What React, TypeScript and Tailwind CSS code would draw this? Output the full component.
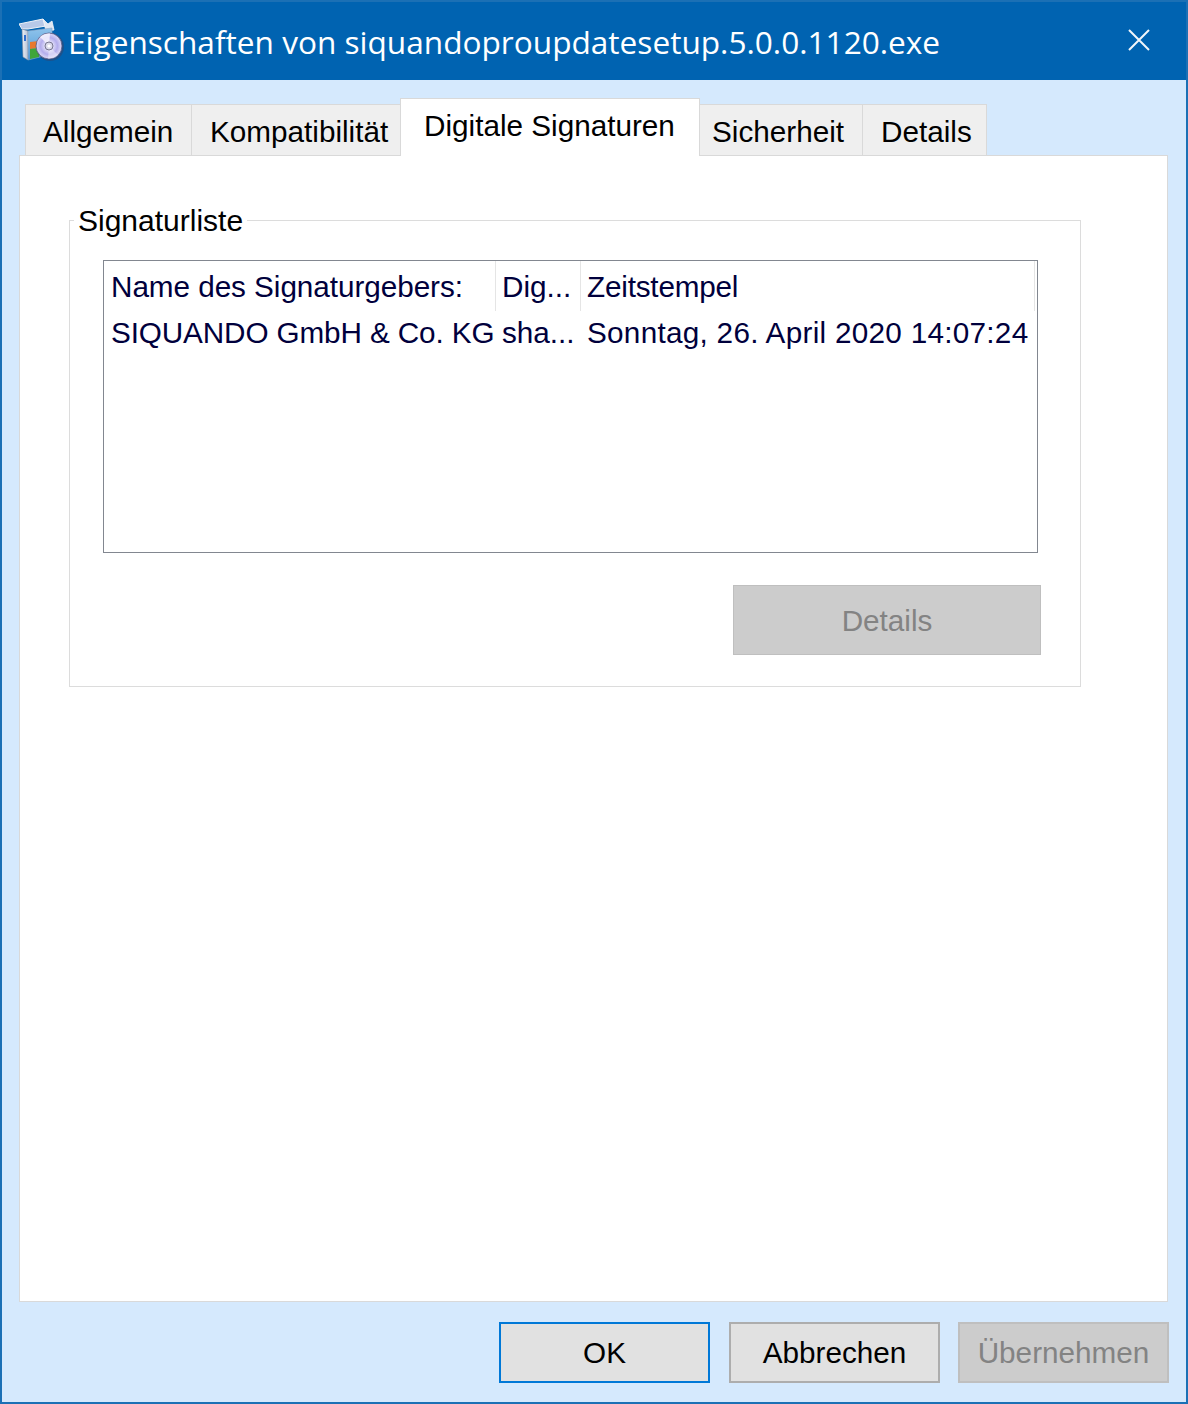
function PackageIcon() {
  return (
    <svg width="46" height="46" viewBox="0 0 46 46" className="shrink-0">
      <defs>
        <linearGradient id="boxSide" x1="0" y1="0" x2="1" y2="0">
          <stop offset="0" stopColor="#f0f3f8" />
          <stop offset="1" stopColor="#b4c0d4" />
        </linearGradient>
        <linearGradient id="boxFront" x1="0" y1="0" x2="0" y2="1">
          <stop offset="0" stopColor="#8fc4ec" />
          <stop offset="1" stopColor="#4f97d4" />
        </linearGradient>
        <radialGradient id="disc" cx="0.5" cy="0.5" r="0.5">
          <stop offset="0.2" stopColor="#ecebfc" />
          <stop offset="0.65" stopColor="#b3adec" />
          <stop offset="1" stopColor="#dedcf8" />
        </radialGradient>
      </defs>
      {/* box flaps */}
      <path d="M0 6 L24 1 L27 8 L9 11 L3 11 Z" fill="#b7c9e8" stroke="#eef2f8" strokeWidth="1" />
      <path d="M24 1 L29 6 L33 3 L35 12 L27 13 Z" fill="#dfe7f3" stroke="#f4f6fa" strokeWidth="0.8" />
      {/* box body */}
      <path d="M3 11 L9 13 L9 42 L4 39 Z" fill="url(#boxSide)" stroke="#7f8a9e" strokeWidth="0.6" />
      <path d="M9 13 L33 10 L33 36 L9 42 Z" fill="url(#boxFront)" stroke="#8fa6c4" strokeWidth="0.6" />
      <rect x="5" y="17" width="2" height="6" fill="#2f6fd0" />
      <path d="M11 24 L20 23 L20 30 L11 31 Z" fill="#e8792e" />
      <path d="M11 31 L20 30 L20 39 L11 41 Z" fill="#3fa53a" />
      {/* disc */}
      <circle cx="31" cy="29" r="14" fill="#3f3f60" opacity="0.45" />
      <circle cx="30" cy="28" r="13" fill="url(#disc)" stroke="#55557f" strokeWidth="0.8" />
      <path d="M30 28 L21 19 A12.5 12.5 0 0 1 31 15.5 Z" fill="#f3f2fe" opacity="0.85" />
      <path d="M30 28 L39 37 A12.5 12.5 0 0 1 29 40.5 Z" fill="#f3f2fe" opacity="0.5" />
      <circle cx="30" cy="28" r="4" fill="#d9d9ea" stroke="#77778f" strokeWidth="1" />
      <circle cx="30" cy="28" r="1.6" fill="#ffffff" />
    </svg>
  );
}

const tabClass = "h-[51px] bg-[#efefef] border border-b-0 border-[#d9d9d9] text-[29.7px] leading-[54px]";
const buttonClass = "h-[61px] w-[211px] border-2 pt-[2px] text-[29.7px] flex items-center justify-center";

export default function App() {
  return (
    <div className="w-[1188px] h-[1404px] border-2 border-[#1b70b5] bg-[#d5e9fd] flex flex-col text-black overflow-hidden font-['Liberation_Sans',Arial,sans-serif]">
      {/* Title bar */}
      <div className="h-[78px] shrink-0 bg-[#0063b1] flex items-center pl-[17px] pr-[36px] text-white">
        <PackageIcon />
        <span className="ml-[3px] mt-[2px] text-[31.6px] whitespace-nowrap font-['Open_Sans',sans-serif]">
          Eigenschaften von siquandoproupdatesetup.5.0.0.1120.exe
        </span>
        <svg width="22" height="22" viewBox="0 0 22 22" className="ml-auto -mt-[2px]">
          <path d="M1 1 L21 21 M21 1 L1 21" stroke="#f2f6fb" strokeWidth="2" fill="none" />
        </svg>
      </div>

      {/* Tabs */}
      <div className="mt-[18px] h-[57px] shrink-0 flex items-end pl-[23px] relative z-10">
        <div className={`${tabClass} w-[167px] pl-[17px]`}>Allgemein</div>
        <div className={`${tabClass} w-[210px] -ml-px pl-[18px] whitespace-nowrap`}>Kompatibilität</div>
        <div className="h-[58px] w-[300px] -ml-px -mb-px bg-white border border-b-0 border-[#d9d9d9] pl-[23px] text-[29.7px] leading-[54px] whitespace-nowrap">
          Digitale Signaturen
        </div>
        <div className={`${tabClass} w-[164px] -ml-px pl-[12px]`}>Sicherheit</div>
        <div className={`${tabClass} w-[125px] -ml-px pl-[18px]`}>Details</div>
      </div>

      {/* Panel */}
      <div className="ml-[17px] w-[1149px] h-[1147px] shrink-0 bg-white border border-[#d9d9d9] pt-[64px] pl-[49px]">
        <div className="relative w-[1012px] h-[467px] border border-[#dcdcdc] pt-[39px] pl-[33px]">
          <span className="absolute left-[4px] -top-[18px] bg-white px-[4px] text-[30px] leading-[36px]">Signaturliste</span>

          <div className="w-[935px] h-[293px] border border-[#828790] text-[29.7px] text-[#00003c]">
            <div className="flex h-[50px] leading-[52px]">
              <div className="w-[392px] pl-[7px] border-r border-[#e5e5e5] whitespace-nowrap tracking-[-0.05px]">Name des Signaturgebers:</div>
              <div className="w-[85px] pl-[6px] border-r border-[#e5e5e5]">Dig...</div>
              <div className="w-[454px] pl-[6px] border-r border-[#e5e5e5] tracking-[-0.2px]">Zeitstempel</div>
            </div>
            <div className="flex h-[42px] leading-[44px] whitespace-nowrap">
              <div className="w-[392px] pl-[7px] tracking-[-0.12px]">SIQUANDO GmbH &amp; Co. KG</div>
              <div className="w-[85px] pl-[6px]">sha...</div>
              <div className="pl-[6px] tracking-[0.28px]">Sonntag, 26. April 2020 14:07:24</div>
            </div>
          </div>

          <div className="mt-[32px] ml-[630px] w-[308px] h-[70px] pt-[2px] bg-[#cccccc] border border-[#bfbfbf] text-[#838383] text-[29.7px] flex items-center justify-center">
            Details
          </div>
        </div>
      </div>

      {/* Footer buttons */}
      <div className="mt-[20px] flex pl-[497px] gap-[19px]">
        <div className={`${buttonClass} bg-[#e1e1e1] border-[#0078d7]`}>OK</div>
        <div className={`${buttonClass} bg-[#e1e1e1] border-[#adadad]`}>Abbrechen</div>
        <div className={`${buttonClass} bg-[#cccccc] border-[#bfbfbf] text-[#838383] -ml-px`}>Übernehmen</div>
      </div>
    </div>
  );
}
